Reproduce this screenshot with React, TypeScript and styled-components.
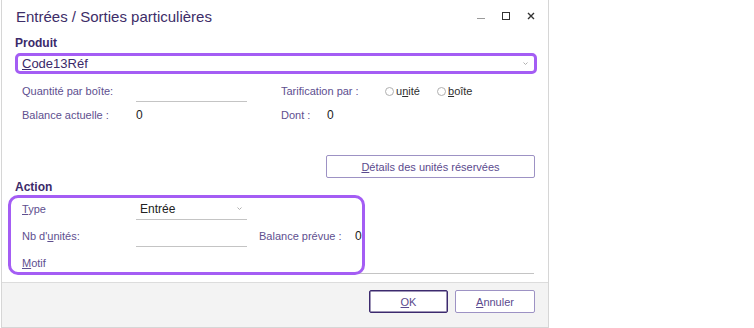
import React from 'react';
import styled, { createGlobalStyle } from 'styled-components';

const GlobalStyle = createGlobalStyle`
  html, body {
    margin: 0;
    padding: 0;
    background: #ffffff;
  }
  body {
    font-family: "Liberation Sans", Arial, sans-serif;
    font-size: 11px;
  }
  u {
    text-decoration-thickness: 1px;
    text-underline-offset: 1px;
  }
`;

const Window = styled.div`
  width: 548px;
  height: 328px;
  margin-left: 1px;
  box-sizing: border-box;
  border: 1px solid #d6d6d6;
  border-top: none;
  display: flex;
  flex-direction: column;
  background: #ffffff;
`;

const TitleBar = styled.div`
  height: 34px;
  flex-shrink: 0;
  display: flex;
  align-items: center;
  justify-content: space-between;
  padding: 0 5px 2px 14px;
  box-sizing: border-box;
`;

const Title = styled.h1`
  margin: 0;
  font-size: 15px;
  font-weight: normal;
  color: #3d2d68;
`;

const WindowControls = styled.div`
  display: flex;
`;

const ControlButton = styled.span`
  width: 25px;
  height: 12px;
  display: flex;
  align-items: center;
  justify-content: center;
`;

const Body = styled.div`
  flex: 1;
  display: flex;
  flex-direction: column;
  padding: 0 13px 0 13px;
`;

const SectionHeading = styled.div`
  height: 16px;
  line-height: 16px;
  margin-top: 1px;
  font-weight: bold;
  font-size: 12px;
  color: #3b2a6a;
`;

const ProductCombo = styled.div`
  height: 21px;
  margin: 2px -2px 0 0;
  box-sizing: border-box;
  border: 3px solid #a45df4;
  border-radius: 5px;
  display: flex;
  align-items: center;
  justify-content: space-between;
  padding: 0 6px 0 4px;
  font-size: 13px;
  color: #3b2a6a;
`;

const FieldRow = styled.div<{ $h?: number; $mt?: number }>`
  height: ${(p) => p.$h ?? 24}px;
  margin-top: ${(p) => p.$mt ?? 0}px;
  display: flex;
  align-items: center;
  padding-left: 7px;
`;

const FieldLabel = styled.span<{ $w: number }>`
  width: ${(p) => p.$w}px;
  flex-shrink: 0;
  color: #5e4f8f;
  white-space: nowrap;
`;

const LineInput = styled.div<{ $w: number }>`
  width: ${(p) => p.$w}px;
  height: 18px;
  flex-shrink: 0;
  margin-top: 4px;
  box-sizing: border-box;
  border-bottom: 1px solid #c4c4c4;
`;

const Gap = styled.span<{ $w: number }>`
  width: ${(p) => p.$w}px;
  flex-shrink: 0;
`;

const Value = styled.span<{ $w?: number }>`
  width: ${(p) => (p.$w ? `${p.$w}px` : 'auto')};
  flex-shrink: 0;
  font-size: 12px;
  color: #222222;
`;

const RadioOption = styled.label<{ $w?: number }>`
  width: ${(p) => (p.$w ? `${p.$w}px` : 'auto')};
  display: flex;
  align-items: center;
  gap: 2px;
  font-size: 11px;
  color: #2e2e2e;
`;

const RadioDot = styled.span`
  width: 9px;
  height: 9px;
  box-sizing: border-box;
  border: 1px solid #b0b0b0;
  border-radius: 50%;
  background: #ffffff;
`;

const SelectBox = styled.div<{ $w: number }>`
  width: ${(p) => p.$w}px;
  height: 20px;
  margin-top: 2px;
  box-sizing: border-box;
  border-bottom: 1px solid #c4c4c4;
  display: flex;
  align-items: center;
  justify-content: space-between;
  padding: 0 5px 2px 4px;
  font-size: 12px;
  color: #222222;
`;

const ButtonRow = styled.div`
  display: flex;
  justify-content: flex-end;
  gap: 7px;
`;

const DetailsRow = styled(ButtonRow)`
  margin-top: 28px;
`;

const PushButton = styled.button<{ $w: number; $primary?: boolean }>`
  width: ${(p) => p.$w}px;
  height: 23px;
  padding: 0;
  box-sizing: border-box;
  border: 1px solid ${(p) => (p.$primary ? '#3c2a6e' : '#9d92c4')};
  box-shadow: ${(p) => (p.$primary ? 'inset 0 0 0 0.5px #3c2a6e' : 'none')};
  border-radius: 2px;
  background: #ffffff;
  font-family: "Liberation Sans", Arial, sans-serif;
  font-size: 11px;
  color: #5b4a8e;
`;

const ActionGroup = styled.div`
  position: relative;
  height: 80px;
  padding-top: 1px;
  box-sizing: border-box;
`;

const Highlight = styled.div`
  position: absolute;
  top: 0;
  left: -7px;
  width: 357px;
  height: 80px;
  box-sizing: border-box;
  border: 3px solid #a45df4;
  border-radius: 10px;
  pointer-events: none;
`;

const Footer = styled.div`
  height: 45px;
  flex-shrink: 0;
  box-sizing: border-box;
  border-top: 1px solid #dcdcdc;
  background: #f3f3f3;
  padding: 7px 13px 0 0;
`;

const Chevron = () => (
  <svg width="5" height="3" viewBox="0 0 5 3">
    <path d="M0.5 0.5 L2.5 2.5 L4.5 0.5" fill="none" stroke="#b0b0b0" strokeWidth="1" />
  </svg>
);

const App: React.FC = () => {
  return (
    <>
      <GlobalStyle />
      <Window>
        <TitleBar>
          <Title>Entrées / Sorties particulières</Title>
          <WindowControls>
            <ControlButton>
              <svg width="10" height="10" viewBox="0 0 10 10">
                <path d="M1 7.5 H9" stroke="#9a9a9a" strokeWidth="1" />
              </svg>
            </ControlButton>
            <ControlButton>
              <svg width="10" height="10" viewBox="0 0 10 10">
                <rect x="1.5" y="1.5" width="7" height="7" fill="none" stroke="#333333" strokeWidth="1" />
              </svg>
            </ControlButton>
            <ControlButton>
              <svg width="10" height="10" viewBox="0 0 10 10">
                <path d="M2 2 L8 8 M8 2 L2 8" stroke="#333333" strokeWidth="1.4" />
              </svg>
            </ControlButton>
          </WindowControls>
        </TitleBar>

        <Body>
          <SectionHeading>Produit</SectionHeading>
          <ProductCombo>
            <span><u>C</u>ode13Réf</span>
            <Chevron />
          </ProductCombo>

          <FieldRow $mt={5}>
            <FieldLabel $w={114}>Quantité par boîte:</FieldLabel>
            <LineInput $w={111} />
            <Gap $w={34} />
            <FieldLabel $w={104}>Tarification par :</FieldLabel>
            <RadioOption $w={52}>
              <RadioDot />
              <span>u<u>n</u>ité</span>
            </RadioOption>
            <RadioOption>
              <RadioDot />
              <span><u>b</u>oîte</span>
            </RadioOption>
          </FieldRow>
          <FieldRow>
            <FieldLabel $w={114}>Balance actuelle :</FieldLabel>
            <Value $w={145}>0</Value>
            <FieldLabel $w={46}>Dont :</FieldLabel>
            <Value>0</Value>
          </FieldRow>

          <DetailsRow>
            <PushButton $w={209}><u>D</u>étails des unités réservées</PushButton>
          </DetailsRow>

          <SectionHeading>Action</SectionHeading>
          <ActionGroup>
            <FieldRow $h={26}>
              <FieldLabel $w={114}><u>T</u>ype</FieldLabel>
              <SelectBox $w={111}>
                <span>Entrée</span>
                <Chevron />
              </SelectBox>
            </FieldRow>
            <FieldRow $h={28}>
              <FieldLabel $w={114}>Nb d'<u>u</u>nités:</FieldLabel>
              <LineInput $w={111} />
              <Gap $w={12} />
              <FieldLabel $w={96}>Balance prévue :</FieldLabel>
              <Value>0</Value>
            </FieldRow>
            <FieldRow $h={26}>
              <FieldLabel $w={114}><u>M</u>otif</FieldLabel>
              <LineInput $w={398} />
            </FieldRow>
            <Highlight />
          </ActionGroup>
        </Body>

        <Footer>
          <ButtonRow>
            <PushButton $w={79} $primary><u>O</u>K</PushButton>
            <PushButton $w={80}><u>A</u>nnuler</PushButton>
          </ButtonRow>
        </Footer>
      </Window>
    </>
  );
};

export default App;
